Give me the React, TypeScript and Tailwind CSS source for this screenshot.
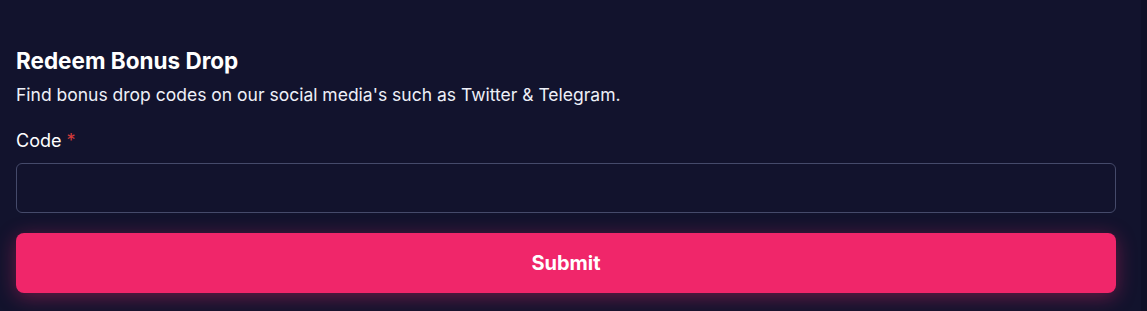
export default function App() {
  return (
    <div className="w-[1147px] h-[311px] bg-[#12132d] flex overflow-hidden" style={{ fontFamily: 'Inter, "Noto Sans", sans-serif' }}>
      <main className="flex-1 pl-4 pr-[25px] pt-[46px]">
        <h2 className="text-[22.5px] leading-[30px] font-bold text-white">Redeem Bonus Drop</h2>
        <p className="text-[17.5px] leading-[26px] text-[#eef0f8] mt-[6px]">
          Find bonus drop codes on our social media's such as Twitter &amp; Telegram.
        </p>
        <label className="block mt-[20px] text-[18px] leading-[26px] text-white">
          Code <span className="text-[#d43b3b]">*</span>
        </label>
        <input
          type="text"
          className="mt-[9px] w-full h-[50px] rounded-md border border-[#454a6a] bg-[#12132d] px-3 text-white outline-none"
        />
        <button className="mt-[20px] w-full h-[60px] rounded-lg bg-[#f0266a] text-white text-[20px] font-bold shadow-[0_4px_20px_rgba(240,38,106,0.4)]">
          Submit
        </button>
      </main>
      <div className="w-[6px] bg-[#0f1027]"></div>
    </div>
  );
}
